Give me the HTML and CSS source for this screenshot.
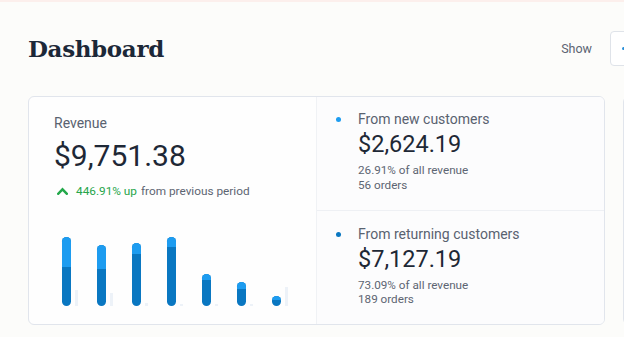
FILE: index.html
```html
<!DOCTYPE html>
<html lang="en">
<head>
<meta charset="utf-8">
<title>Dashboard</title>
<link rel="stylesheet" href="styles.css">
</head>
<body>
<div class="topline"></div>
<div class="page">
  <header class="header">
    <h1 class="title">Dashboard</h1>
    <div class="spacer"></div>
    <span class="show">Show</span>
    <div class="select"><span class="select-dot"></span></div>
  </header>
  <section class="cards">
    <div class="card">
      <div class="left">
        <div class="label">Revenue</div>
        <div class="total">$9,751.38</div>
        <div class="growth">
          <svg class="caret" width="11" height="8" viewBox="0 0 11 8"><path d="M1.2 6.8 L5.5 2.3 L9.8 6.8" fill="none" stroke="#23a84a" stroke-width="2.4" stroke-linecap="square" stroke-linejoin="miter"/></svg>
          <span class="up">446.91% up</span>
          <span class="from">from previous period</span>
        </div>
        <div class="chart">
          <div class="group"><div class="bar" style="height:69px"><div class="bar-top" style="height:30px"></div></div><div class="ghost" style="height:16px"></div></div>
          <div class="group"><div class="bar" style="height:61px"><div class="bar-top" style="height:24px"></div></div><div class="ghost" style="height:13px"></div></div>
          <div class="group"><div class="bar" style="height:63px"><div class="bar-top" style="height:11px"></div></div><div class="ghost" style="height:3px"></div></div>
          <div class="group"><div class="bar" style="height:69px"><div class="bar-top" style="height:10px"></div></div><div class="ghost" style="height:2px"></div></div>
          <div class="group"><div class="bar" style="height:32px"><div class="bar-top" style="height:6px"></div></div><div class="ghost" style="height:2px"></div></div>
          <div class="group"><div class="bar" style="height:24px"><div class="bar-top" style="height:7px"></div></div><div class="ghost" style="height:2px"></div></div>
          <div class="group"><div class="bar" style="height:10px"><div class="bar-top" style="height:4px"></div></div><div class="ghost" style="height:19px"></div></div>
        </div>
      </div>
      <div class="right">
        <div class="segment">
          <span class="dot dot-new"></span>
          <div class="seg-body">
            <div class="seg-label">From new customers</div>
            <div class="seg-amount">$2,624.19</div>
            <div class="seg-meta">26.91% of all revenue<br>56 orders</div>
          </div>
        </div>
        <div class="segment segment-last">
          <span class="dot dot-ret"></span>
          <div class="seg-body">
            <div class="seg-label">From returning customers</div>
            <div class="seg-amount">$7,127.19</div>
            <div class="seg-meta">73.09% of all revenue<br>189 orders</div>
          </div>
        </div>
      </div>
    </div>
    <div class="card card-next"></div>
  </section>
</div>
</body>
</html>
```

FILE: styles.css
```css
html, body {
  margin: 0;
  padding: 0;
}
body {
  width: 624px;
  height: 337px;
  overflow: hidden;
  background: #fcfcfa;
  font-family: Roboto, "Liberation Sans", Arial, sans-serif;
  color: #1e2836;
}
.topline {
  height: 2px;
  background: #fcefec;
}
.page {
  width: 780px;
}
.header {
  display: flex;
  align-items: center;
  height: 35px;
  margin-top: 29px;
  padding: 0 50px 0 28px;
}
.title {
  margin: 0;
  font-family: "DejaVu Serif", "Liberation Serif", serif;
  font-weight: 700;
  font-size: 23px;
  letter-spacing: -0.35px;
  line-height: 35px;
  color: #1c2838;
}
.spacer {
  flex: 1;
}
.show {
  font-size: 12.5px;
  color: #5b6472;
  margin-right: 18px;
}
.select {
  box-sizing: border-box;
  width: 120px;
  height: 35px;
  border: 1px solid #dfe3e9;
  border-radius: 4px;
  background: #fff;
  display: flex;
  align-items: center;
  padding-left: 11px;
}
.select-dot {
  width: 4px;
  height: 3px;
  border-radius: 2px;
  background: #2a8fd8;
}
.cards {
  display: flex;
  gap: 18px;
  margin-top: 30px;
  padding-left: 28px;
}
.card {
  box-sizing: border-box;
  flex: none;
  width: 577px;
  height: 229px;
  border: 1px solid #e1e5ec;
  border-radius: 6px;
  background: #fefefe;
  display: flex;
  overflow: hidden;
}
.left {
  box-sizing: border-box;
  width: 287px;
  padding: 16px 0 18px 25px;
  display: flex;
  flex-direction: column;
}
.label {
  font-size: 14px;
  line-height: 20px;
  color: #596270;
}
.total {
  margin-top: 5px;
  font-size: 30px;
  line-height: 36px;
  color: #1e2836;
}
.growth {
  margin-top: 8px;
  display: flex;
  align-items: center;
  font-size: 11.8px;
  line-height: 18px;
}
.caret {
  margin: 0 8px 0 3px;
}
.up {
  color: #27a54a;
  margin-right: 4px;
}
.from {
  color: #5d6572;
}
.chart {
  flex: 1;
  display: flex;
  align-items: flex-end;
  gap: 19px;
  padding-left: 8px;
}
.group {
  display: flex;
  align-items: flex-end;
  gap: 4px;
}
.bar {
  width: 9px;
  border-radius: 4.5px;
  background: #0a77c1;
  overflow: hidden;
}
.bar-top {
  background: #1d9cf0;
}
.ghost {
  width: 3px;
  background: #edf2f8;
}
.right {
  flex: 1;
  display: flex;
  flex-direction: column;
  border-left: 1px solid #f0f2f5;
  background: #fcfcfd;
}
.segment {
  flex: 1;
  display: flex;
  padding: 12px 0 0 19px;
  border-bottom: 1px solid #eef0f4;
}
.segment-last {
  border-bottom: none;
  padding-top: 13px;
}
.dot {
  width: 5px;
  height: 5px;
  border-radius: 50%;
  margin-top: 8px;
  margin-right: 17px;
  flex: none;
}
.dot-new {
  background: #1d9cf0;
}
.dot-ret {
  background: #0a77c1;
}
.seg-label {
  font-size: 14px;
  line-height: 20px;
  color: #596270;
}
.seg-amount {
  font-size: 23.5px;
  line-height: 30px;
  color: #1e2836;
}
.seg-meta {
  margin-top: 4px;
  font-size: 11.7px;
  line-height: 14.5px;
  color: #5d6572;
}
.card-next {
  display: block;
}
```
